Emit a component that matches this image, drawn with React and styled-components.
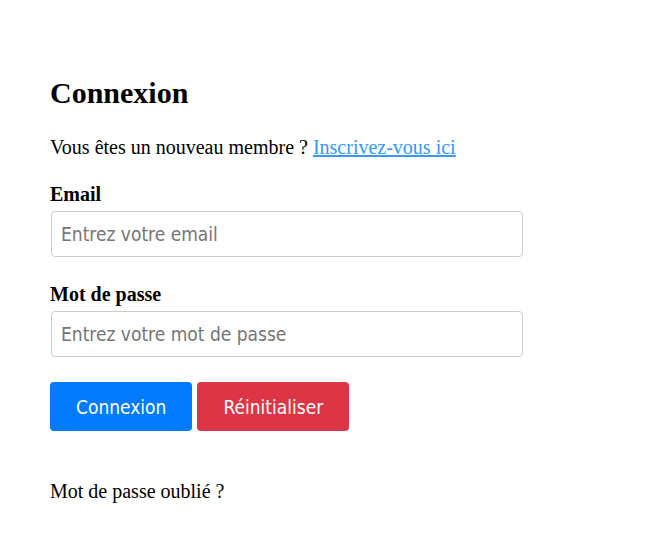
import React from 'react';
import styled, { createGlobalStyle } from 'styled-components';

const GlobalStyle = createGlobalStyle`
  body {
    margin: 0;
    background: #fff;
    font-family: "Liberation Serif", "Times New Roman", serif;
    color: #000;
  }
`;

export default function App() {
  return (
    <>
      <GlobalStyle />
      <Page>
        <Title>Connexion</Title>
        <Intro>
          Vous êtes un nouveau membre ? <SignupLink href='#'>Inscrivez-vous ici</SignupLink>
        </Intro>

        <Form onSubmit={(e) => e.preventDefault()}>
          <Field>
            <Label htmlFor='email'>Email</Label>
            <Input id='email' type='email' placeholder='Entrez votre email' />
          </Field>
          <Field>
            <Label htmlFor='password'>Mot de passe</Label>
            <Input id='password' type='password' placeholder='Entrez votre mot de passe' />
          </Field>

          <Actions>
            <Button type='submit' $variant='primary'>Connexion</Button>
            <Button type='reset' $variant='danger'>Réinitialiser</Button>
          </Actions>
        </Form>

        <Forgot>Mot de passe oublié ?</Forgot>
      </Page>
    </>
  );
}

const Page = styled.div`
  width: 473px;
  padding: 75px 50px 40px;
`;

const Title = styled.h2`
  margin: 0 0 25px;
  font-size: 30px;
  font-weight: 700;
  line-height: 36px;
`;

const Intro = styled.p`
  margin: 0 0 24px;
  font-size: 20px;
  line-height: 23px;
`;

const SignupLink = styled.a`
  color: #3399ff;
  text-decoration: underline;
`;

const Form = styled.form`
  display: flex;
  flex-direction: column;
`;

const Field = styled.div`
  display: flex;
  flex-direction: column;

  & + & {
    margin-top: 26px;
  }
`;

const Label = styled.label`
  font-size: 20px;
  font-weight: 700;
  line-height: 23px;
  margin-bottom: 5px;
`;

const Input = styled.input`
  box-sizing: border-box;
  width: 472px;
  height: 46px;
  margin-left: 1px;
  padding: 0 9px;
  border: 1px solid #ccc;
  border-radius: 4px;
  font-family: "DejaVu Sans Condensed", "DejaVu Sans", sans-serif;
  font-size: 19px;
  color: #333;
  outline: none;

  &::placeholder {
    color: #757575;
  }
`;

const Actions = styled.div`
  display: flex;
  gap: 5px;
  margin-top: 25px;
`;

const Button = styled.button`
  height: 49px;
  padding: 0 26px;
  border: none;
  border-radius: 4px;
  font-family: "DejaVu Sans Condensed", "DejaVu Sans", sans-serif;
  font-size: 19px;
  color: #fff;
  background: ${(p) => (p.$variant === 'danger' ? '#dc3545' : '#007bff')};
  cursor: pointer;
`;

const Forgot = styled.p`
  margin: 49px 0 0;
  font-size: 20px;
  line-height: 23px;
`;
